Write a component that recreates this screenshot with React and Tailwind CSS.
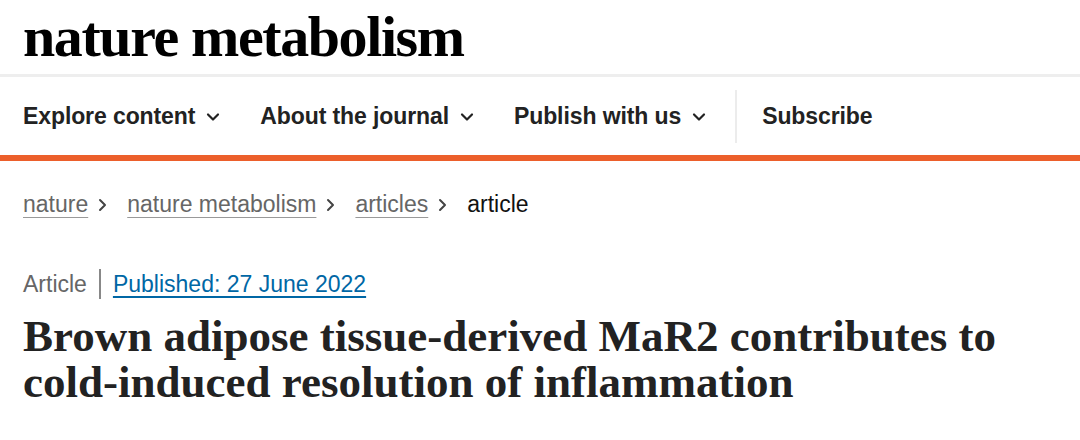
import React from "react";

const Chevron = () => (
  <svg width="14" height="14" viewBox="0 0 14 14" fill="none" className="ml-[11px] mt-[2px]">
    <path d="M2 4.5 L7 9.5 L12 4.5" stroke="#222" strokeWidth="2.2" strokeLinecap="round" strokeLinejoin="round" />
  </svg>
);

const NavItem = ({ label }) => (
  <div className="flex items-center text-[23px] font-bold text-[#222] tracking-[-0.1px]">
    <span>{label}</span>
    <Chevron />
  </div>
);

const Crumb = ({ label }) => (
  <a className="text-[#666] underline underline-offset-[5px] decoration-[1px] decoration-[#999]">{label}</a>
);

const Sep = () => (
  <svg width="9" height="14" viewBox="0 0 9 14" fill="none" className="ml-[10px] mr-[20px] mt-[2px]">
    <path d="M2 2 L7 7 L2 12" stroke="#444" strokeWidth="2" strokeLinecap="round" strokeLinejoin="round" />
  </svg>
);

export default function App() {
  const sans = { fontFamily: '"Liberation Sans", Arial, sans-serif' };
  return (
    <div className="w-[1080px] h-[440px] bg-white overflow-hidden" style={sans}>
      <header className="h-[77px] border-b-[3px] border-[#eeeeee] px-[23px] flex items-start">
        <div
          className="font-bold text-[58px] leading-none tracking-[-1.4px] text-black mt-[8px]"
          style={{ fontFamily: '"Liberation Serif", "Times New Roman", serif' }}
        >
          nature metabolism
        </div>
      </header>

      <nav className="h-[84px] border-b-[6px] border-[#ec5f2b] px-[23px] flex items-center">
        <div className="flex items-center gap-[40px]">
          <NavItem label="Explore content" />
          <NavItem label="About the journal" />
          <NavItem label="Publish with us" />
        </div>
        <div className="w-[2px] h-[53px] bg-[#ececec] ml-[29px] mr-[25px]" />
        <div className="text-[23px] font-bold text-[#222] tracking-[-0.1px]">Subscribe</div>
      </nav>

      <div className="px-[23px] pt-[26px] flex items-center text-[23px]">
        <Crumb label="nature" />
        <Sep />
        <Crumb label="nature metabolism" />
        <Sep />
        <Crumb label="articles" />
        <Sep />
        <span className="text-[#111]">article</span>
      </div>

      <div className="px-[23px] pt-[45px] flex items-center text-[23px]">
        <span className="text-[#666]">Article</span>
        <span className="w-[2px] h-[30px] bg-[#888] ml-[12px] mr-[12px]" />
        <a className="text-[#0067a5] underline underline-offset-[4px] decoration-[1.5px]">Published: 27 June 2022</a>
      </div>

      <h1
        className="px-[23px] mt-[12px] font-bold text-[45px] leading-[46px] text-[#222]"
        style={{ fontFamily: '"Liberation Serif", "Times New Roman", serif' }}
      >
        Brown adipose tissue-derived MaR2 contributes to
        <br />
        cold-induced resolution of inflammation
      </h1>
    </div>
  );
}
